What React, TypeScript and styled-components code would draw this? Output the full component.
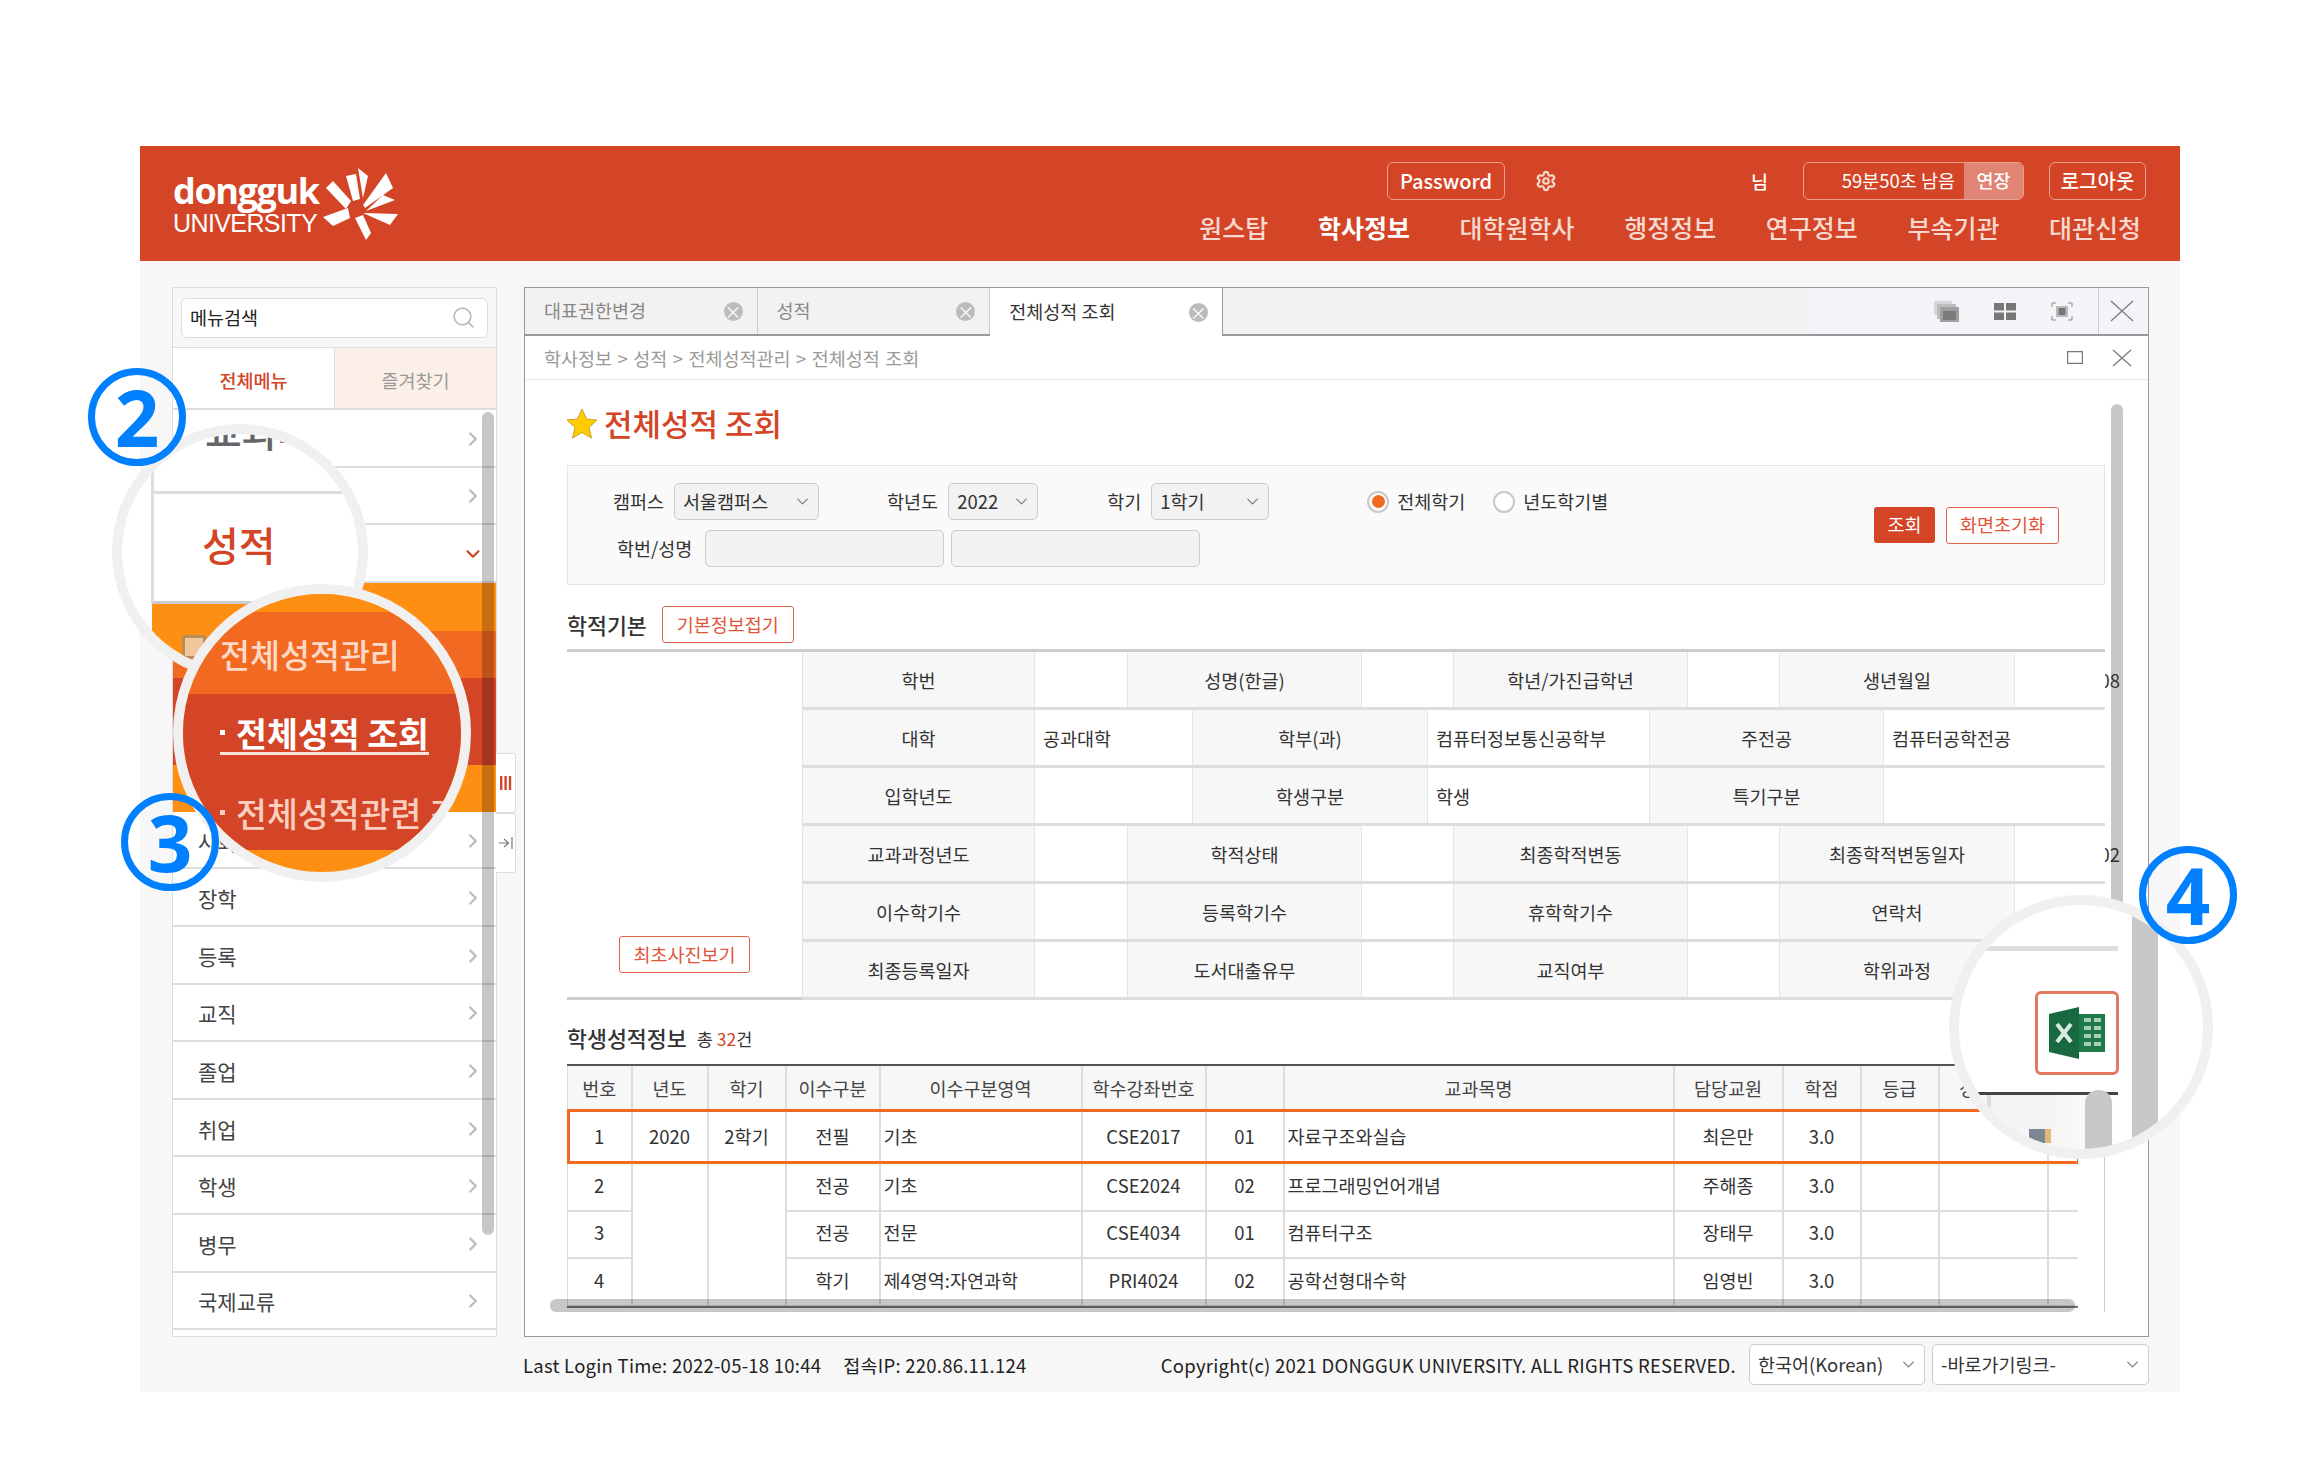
import React from "react";
import styled, { createGlobalStyle } from "styled-components";
import { ChevronDown, ChevronRight, Search, Settings } from "lucide-react";

const RED = "#d34526";
const ORANGE = "#ff8f12";
const DEEP_ORANGE = "#f26a21";
const BLUE = "#0080ff";

const GlobalStyle = createGlobalStyle`
  html, body {
    margin: 0;
    background: #fff;
    font-family: "Noto Sans CJK KR", "Noto Sans", sans-serif;
    font-size: 18.5px;
    color: #333;
  }
  * { box-sizing: border-box; }
`;

// Data
const NAV = ["원스탑", "학사정보", "대학원학사", "행정정보", "연구정보", "부속기관", "대관신청"];
const MENU_BOTTOM = ["장학", "등록", "교직", "졸업", "취업", "학생", "병무", "국제교류"];
const TABS = ["대표권한변경", "성적", "전체성적 조회"];

const WIDE = [233, 92, 235, 91, 235, 91, 236, 90];
const NARROW = [233, 157, 236, 221, 235, 221];

const INFO_ROWS: { cols: number[]; cells: string[]; tail?: string }[] = [
  { cols: WIDE, cells: ["학번", "", "성명(한글)", "", "학년/가진급학년", "", "생년월일", ""], tail: "08" },
  { cols: NARROW, cells: ["대학", "공과대학", "학부(과)", "컴퓨터정보통신공학부", "주전공", "컴퓨터공학전공"] },
  { cols: NARROW, cells: ["입학년도", "", "학생구분", "학생", "특기구분", ""] },
  { cols: WIDE, cells: ["교과과정년도", "", "학적상태", "", "최종학적변동", "", "최종학적변동일자", ""], tail: "02" },
  { cols: WIDE, cells: ["이수학기수", "", "등록학기수", "", "휴학학기수", "", "연락처", ""] },
  { cols: WIDE, cells: ["최종등록일자", "", "도서대출유무", "", "교직여부", "", "학위과정", ""] },
];

const GRADE_COLS = [64, 76, 78, 94, 202, 124, 78, 390, 109, 78, 78, 109, 31];
const GRADE_HEAD = ["번호", "년도", "학기", "이수구분", "이수구분영역", "학수강좌번호", "", "교과목명", "담당교원", "학점", "등급", "성적구분", ""];
const GRADE_ROWS = [
  ["2", "전공", "기초", "CSE2024", "02", "프로그래밍언어개념", "주해종"],
  ["3", "전공", "전문", "CSE4034", "01", "컴퓨터구조", "장태무"],
  ["4", "학기", "제4영역:자연과학", "PRI4024", "02", "공학선형대수학", "임영빈"],
];

function Thin({ d, w, h }: { d: string; w: number; h: number }) {
  return (
    <svg width={w} height={h} viewBox={`0 0 ${w} ${h}`} fill="none" stroke="#777" strokeWidth="1.2">
      <path d={d} />
    </svg>
  );
}

function Logo() {
  return (
    <LogoWrap>
      <LogoText>
        <LogoName>dongguk</LogoName>
        <LogoSub>UNIVERSITY</LogoSub>
      </LogoText>
      <svg width="75" height="72" viewBox="0 0 75 72" fill="#fff">
        <polygon points="3,20 10,13 28,33 23,41" />
        <polygon points="23,8 33,6 37,31 30,33" />
        <polygon points="35,0 45,8 40,30" />
        <polygon points="63,5 70,20 42,40 40,37" />
        <polygon points="60,27 72,32 43,43" />
        <polygon points="40,45 75,46 67,57" />
        <polygon points="32,50 40,47 48,65 43,72" />
        <polygon points="0,49 25,40 27,50 10,58" />
        <circle cx="34" cy="41" r="7" fill={RED} />
      </svg>
    </LogoWrap>
  );
}

function ExcelIcon() {
  return (
    <svg width="56" height="52" viewBox="0 0 56 52">
      <rect x="28" y="7" width="28" height="38" fill="#1f7a4a" />
      <g fill="#a9cdb8">
        <rect x="35" y="11" width="7" height="4" />
        <rect x="45" y="11" width="7" height="4" />
        <rect x="35" y="19" width="7" height="4" />
        <rect x="45" y="19" width="7" height="4" />
        <rect x="35" y="27" width="7" height="4" />
        <rect x="45" y="27" width="7" height="4" />
        <rect x="35" y="35" width="7" height="4" />
        <rect x="45" y="35" width="7" height="4" />
      </g>
      <polygon points="0,7 30,0 30,52 0,45" fill="#18693f" />
      <path d="M8 17L22 35M22 17L8 35" stroke="#dcebe2" strokeWidth="4" fill="none" />
    </svg>
  );
}

function Select({ width, label, footer }: { width: number; label: string; footer?: boolean }) {
  return (
    <SelectBox $width={width} $footer={footer}>
      <SelectText>{label}</SelectText>
      <ChevronDown size={19} strokeWidth={1.4} color="#777" />
    </SelectBox>
  );
}

function MenuChevron() {
  return <ChevronRight size={22} color="#bdbdbd" strokeWidth={2.6} />;
}

export default function App() {
  return (
    <Page>
      <GlobalStyle />
      <Frame>
        <Header>
          <Logo />
          <HeaderRight>
            <TopRow>
              <HeaderBtn $width={118}>Password</HeaderBtn>
              <GearSlot>
                <Settings size={22} color="#f6d7cc" strokeWidth={2.4} />
              </GearSlot>
              <Sir>님</Sir>
              <Timer>
                <TimerText>59분50초 남음</TimerText>
                <Extend>연장</Extend>
              </Timer>
              <LogoutBtn $width={97}>로그아웃</LogoutBtn>
            </TopRow>
            <Nav>
              {NAV.map((item) => (
                <NavItem key={item} $active={item === "학사정보"}>
                  {item}
                </NavItem>
              ))}
            </Nav>
          </HeaderRight>
        </Header>

        <Body>
          <Sidebar>
            <SearchArea>
              <SearchBox>
                메뉴검색
                <Search size={25} color="#bbb" strokeWidth={1.6} />
              </SearchBox>
            </SearchArea>
            <SideTabs>
              <SideTab $active>전체메뉴</SideTab>
              <SideTab>즐겨찾기</SideTab>
            </SideTabs>
            <MenuRow>
              <span />
              <MenuChevron />
            </MenuRow>
            <MenuRow>
              <span />
              <MenuChevron />
            </MenuRow>
            <MenuRow>
              <span />
              <ChevronDown size={22} color={RED} strokeWidth={2.4} />
            </MenuRow>
            <SubMenu>
              <SubBand $color={ORANGE} $height={48} />
              <SubBand $color={DEEP_ORANGE} $height={47} />
              <SubBand $color={RED} $height={87} />
              <SubBand $color={ORANGE} $height={47} />
            </SubMenu>
            <MenuRow>
              <MenuLabel>사회봉사</MenuLabel>
              <MenuChevron />
            </MenuRow>
            {MENU_BOTTOM.map((item) => (
              <MenuRow key={item}>
                <MenuLabel>{item}</MenuLabel>
                <MenuChevron />
              </MenuRow>
            ))}
            <SideScroll />
            <SideHandle $top={465}>
              <svg width="12" height="14" viewBox="0 0 12 14" fill={RED}>
                <rect x="0" width="2.4" height="14" />
                <rect x="4.4" width="2.4" height="14" />
                <rect x="8.8" width="2.4" height="14" />
              </svg>
            </SideHandle>
            <SideHandle $top={525}>
              <Thin w={14} h={14} d="M0 7H9M5 3L9.5 7L5 11M13 1V13" />
            </SideHandle>
          </Sidebar>

          <Main>
            <TabBar>
              {TABS.map((tab) => (
                <Tab key={tab} $active={tab === "전체성적 조회"}>
                  <TabLabel>{tab}</TabLabel>
                  <TabClose>×</TabClose>
                </Tab>
              ))}
              <TabFill />
              <TabTools>
                <ToolIcon>
                  <svg width="25" height="21" viewBox="0 0 25 21">
                    <rect x="0" y="0" width="18" height="14" fill="#d6d6d6" />
                    <rect x="3" y="3" width="19" height="15" fill="#bdbdbd" />
                    <rect x="6" y="6" width="19" height="15" fill="#a0a0a0" />
                    <rect x="9" y="10" width="13" height="9" fill="#7c7c7c" />
                  </svg>
                </ToolIcon>
                <ToolIcon>
                  <svg width="22" height="17" viewBox="0 0 22 17" fill="#777">
                    <rect width="10" height="7.5" />
                    <rect x="12" width="10" height="7.5" />
                    <rect y="9.5" width="10" height="7.5" />
                    <rect x="12" y="9.5" width="10" height="7.5" />
                  </svg>
                </ToolIcon>
                <ToolIcon>
                  <svg width="22" height="19" viewBox="0 0 22 19" fill="none">
                    <path d="M1 5V1H5M17 1H21V5M21 14V18H17M5 18H1V14" stroke="#888" />
                    <rect x="5" y="4" width="12" height="11" fill="#bbb" />
                    <rect x="7.5" y="6" width="7" height="7" fill="#777" />
                  </svg>
                </ToolIcon>
                <ToolClose>
                  <Thin w={24} h={22} d="M1 1L23 21M23 1L1 21" />
                </ToolClose>
              </TabTools>
            </TabBar>

            <Crumb>
              <CrumbText>학사정보 &gt; 성적 &gt; 전체성적관리 &gt; 전체성적 조회</CrumbText>
              <CrumbTools>
                <Thin w={16} h={13} d="M0.6 0.6H15.4V12.4H0.6Z" />
                <Thin w={24} h={18} d="M3 1L21 17M21 1L3 17" />
              </CrumbTools>
            </Crumb>

            <Content>
              <TitleRow>
                <svg width="32" height="31" viewBox="0 0 32 31">
                  <polygon
                    points="16,1 20.5,11 31,12 23,19.5 25.5,30 16,24.5 6.5,30 9,19.5 1,12 11.5,11"
                    fill="#ffcc00"
                    stroke="#c9a227"
                  />
                </svg>
                <PageTitle>전체성적 조회</PageTitle>
              </TitleRow>

              <FilterBox>
                <FilterCol>
                  <FilterRow>
                    <FieldLabel>캠퍼스</FieldLabel>
                    <Select width={145} label="서울캠퍼스" />
                    <FieldLabel $gap={68}>학년도</FieldLabel>
                    <Select width={90} label="2022" />
                    <FieldLabel $gap={69}>학기</FieldLabel>
                    <Select width={118} label="1학기" />
                    <RadioGroup>
                      <Radio $checked />
                      <RadioText>전체학기</RadioText>
                      <Radio />
                      <RadioText>년도학기별</RadioText>
                    </RadioGroup>
                  </FilterRow>
                  <FilterRow $indent={4}>
                    <FieldLabel>학번/성명</FieldLabel>
                    <FilterInput $width={239} />
                    <FilterInput $width={249} $gap={7} />
                  </FilterRow>
                </FilterCol>
                <FilterButtons>
                  <SolidBtn>조회</SolidBtn>
                  <LineBtn $width={113}>화면초기화</LineBtn>
                </FilterButtons>
              </FilterBox>

              <SectionRow>
                <SectionTitle>학적기본</SectionTitle>
                <LineBtn $width={132}>기본정보접기</LineBtn>
              </SectionRow>

              <InfoTable>
                <PhotoCol>
                  <LineBtn $width={131}>최초사진보기</LineBtn>
                </PhotoCol>
                <InfoRows>
                  {INFO_ROWS.map((row) => (
                    <InfoRow key={row.cells[0]} $cols={row.cols}>
                      {row.cells.map((cell, i) =>
                        i % 2 === 0 ? (
                          <InfoHead key={i}>{cell}</InfoHead>
                        ) : (
                          <InfoValue key={i}>
                            {cell}
                            {i === row.cells.length - 1 && row.tail && <TailDigits>{row.tail}</TailDigits>}
                          </InfoValue>
                        )
                      )}
                    </InfoRow>
                  ))}
                </InfoRows>
              </InfoTable>

              <GradeTitleRow>
                <SectionTitle>학생성적정보</SectionTitle>
                <GradeCount>
                  총 <em>32</em>건
                </GradeCount>
              </GradeTitleRow>

              <GradeWrap>
                <GradeClip>
                  <GradeTable>
                    <colgroup>
                      {GRADE_COLS.map((w, i) => (
                        <col key={i} width={w} />
                      ))}
                    </colgroup>
                    <thead>
                      <tr>
                        {GRADE_HEAD.map((head, i) => (
                          <GradeHead key={i}>{head}</GradeHead>
                        ))}
                      </tr>
                    </thead>
                    <tbody>
                      <HighlightRow>
                        <GradeCell>1</GradeCell>
                        <GradeCell>2020</GradeCell>
                        <GradeCell>2학기</GradeCell>
                        <GradeCell>전필</GradeCell>
                        <GradeCell $left>기초</GradeCell>
                        <GradeCell>CSE2017</GradeCell>
                        <GradeCell>01</GradeCell>
                        <GradeCell $left>자료구조와실습</GradeCell>
                        <GradeCell>최은만</GradeCell>
                        <GradeCell>3.0</GradeCell>
                        <GradeCell />
                        <GradeCell />
                        <GradeCell />
                      </HighlightRow>
                      {GRADE_ROWS.map((row, i) => (
                        <PlainRow key={row[0]}>
                          <GradeCell>{row[0]}</GradeCell>
                          {i === 0 && <GradeCell rowSpan={3} />}
                          {i === 0 && <GradeCell rowSpan={3} />}
                          <GradeCell>{row[1]}</GradeCell>
                          <GradeCell $left>{row[2]}</GradeCell>
                          <GradeCell>{row[3]}</GradeCell>
                          <GradeCell>{row[4]}</GradeCell>
                          <GradeCell $left>{row[5]}</GradeCell>
                          <GradeCell>{row[6]}</GradeCell>
                          <GradeCell>3.0</GradeCell>
                          <GradeCell />
                          <GradeCell />
                          <GradeCell />
                        </PlainRow>
                      ))}
                    </tbody>
                  </GradeTable>
                </GradeClip>
                <HScroll />
              </GradeWrap>
            </Content>
            <VScroll />
          </Main>
        </Body>

        <Footer>
          <FooterText>Last Login Time: 2022-05-18 10:44</FooterText>
          <FooterText $gap={22}>접속IP: 220.86.11.124</FooterText>
          <FooterSpacer />
          <FooterText $after={6}>Copyright(c) 2021 DONGGUK UNIVERSITY. ALL RIGHTS RESERVED.</FooterText>
          <Select width={176} label="한국어(Korean)" footer />
          <Select width={217} label="-바로가기링크-" footer />
        </Footer>
      </Frame>

      {/* Magnifier callouts */}
      <Lens $left={112} $top={424} $size={256}>
        <LensTopRow>
          <LensFaint>교과과정</LensFaint>
        </LensTopRow>
        <LensGradeRow>성적</LensGradeRow>
        <LensOrange>
          <LensIcon />
        </LensOrange>
      </Lens>

      <Lens $left={173} $top={584} $size={298} $fill={ORANGE}>
        <LensBand $color={ORANGE} $height={18} />
        <LensBand $color={DEEP_ORANGE} $height={82}>
          <LensMenuTitle>전체성적관리</LensMenuTitle>
        </LensBand>
        <LensBand $color={RED} $height={156} $column>
          <LensItem $active>
            <LensDot />
            전체성적 조회
          </LensItem>
          <LensItem>
            <LensDot />
            전체성적관련 조회
          </LensItem>
        </LensBand>
      </Lens>

      <Lens $left={1949} $top={895} $size={264}>
        <LensRule $color="#dedede" $height={5} $gap={41} />
        <ExcelBox>
          <ExcelIcon />
        </ExcelBox>
        <LensRule $color="#444" $height={3} $gap={17} />
        <LensHeadArea>
          <LensColLine />
          <LensMark />
        </LensHeadArea>
        <LensMiniScroll />
        <LensBigScroll />
      </Lens>

      <Badge $left={88} $top={368}>2</Badge>
      <Badge $left={121} $top={793}>3</Badge>
      <Badge $left={2139} $top={846}>4</Badge>
    </Page>
  );
}

const Page = styled.div`
  position: relative;
  width: 2305px;
  height: 1464px;
  padding: 146px 0 0 140px;
  overflow: hidden;
  background: #fff;
`;

const Frame = styled.div`
  width: 2040px;
  height: 1246px;
  display: flex;
  flex-direction: column;
  background: #f7f7f7;
`;

const Header = styled.header`
  height: 115px;
  flex: none;
  display: flex;
  justify-content: space-between;
  padding: 16px 34px 0 33px;
  background: ${RED};
  color: #fff;
`;

const LogoWrap = styled.div`
  display: flex;
  align-items: flex-start;
  gap: 5px;
  padding-top: 6px;
`;

const LogoText = styled.div`
  width: 145px;
  display: flex;
  flex-direction: column;
  padding-top: 4px;
  white-space: nowrap;
`;

const LogoName = styled.div`
  font-family: "Open Sans", sans-serif;
  font-size: 36px;
  font-weight: 700;
  line-height: 38px;
  letter-spacing: -1.4px;
`;

const LogoSub = styled.div`
  margin-top: 2px;
  font-family: "Liberation Sans", sans-serif;
  font-size: 25px;
  line-height: 23px;
  letter-spacing: -0.6px;
`;

const HeaderRight = styled.div`
  display: flex;
  flex-direction: column;
  align-items: flex-end;
`;

const TopRow = styled.div`
  display: flex;
  align-items: center;
  height: 38px;
  font-size: 20px;
  font-weight: 500;
`;

const HeaderBtn = styled.div<{ $width: number }>`
  width: ${(p) => p.$width}px;
  height: 38px;
  display: flex;
  align-items: center;
  justify-content: center;
  padding-bottom: 2px;
  border: 1px solid #e9a08e;
  border-radius: 6px;
`;

const LogoutBtn = styled(HeaderBtn)`
  margin-left: 25px;
`;

const GearSlot = styled.div`
  display: flex;
  margin-left: 30px;
`;

const Sir = styled.div`
  margin-left: 194px;
  margin-right: 35px;
  font-size: 18.5px;
`;

const Timer = styled.div`
  width: 221px;
  height: 38px;
  display: flex;
  align-items: center;
  justify-content: flex-end;
  border: 1px solid #e9a08e;
  border-radius: 6px;
  overflow: hidden;
  font-size: 18.5px;
  font-weight: 400;
`;

const TimerText = styled.span`
  margin-right: 9px;
  padding-bottom: 2px;
`;

const Extend = styled.span`
  width: 59px;
  height: 100%;
  display: flex;
  align-items: center;
  justify-content: center;
  padding-bottom: 2px;
  background: #e08573;
  font-weight: 500;
`;

const Nav = styled.nav`
  display: flex;
  gap: 49.6px;
  margin-top: 10px;
  padding-right: 5px;
`;

const NavItem = styled.div<{ $active?: boolean }>`
  font-size: 25px;
  line-height: 34px;
  font-weight: ${(p) => (p.$active ? 700 : 500)};
  color: ${(p) => (p.$active ? "#fff" : "#f7d9cf")};
`;

const Body = styled.div`
  height: 1050px;
  flex: none;
  display: flex;
  gap: 27px;
  margin: 26px 31px 0 32px;
`;

const Sidebar = styled.aside`
  position: relative;
  width: 325px;
  flex: none;
  display: flex;
  flex-direction: column;
  border: 1px solid #ddd;
  background: #fff;
`;

const SearchArea = styled.div`
  height: 60px;
  padding: 10px 8px;
  background: #f7f7f7;
  border-bottom: 1px solid #ddd;
`;

const SearchBox = styled.div`
  height: 40px;
  display: flex;
  align-items: center;
  justify-content: space-between;
  padding: 0 11px 2px 8px;
  background: #fff;
  border: 1px solid #ddd;
  border-radius: 6px;
  color: #222;
`;

const SideTabs = styled.div`
  height: 62px;
  flex: none;
  display: grid;
  grid-template-columns: 161px 1fr;
  border-bottom: 2px solid #ddd;
`;

const SideTab = styled.div<{ $active?: boolean }>`
  display: flex;
  align-items: center;
  justify-content: center;
  padding-top: 3px;
  background: ${(p) => (p.$active ? "#fff" : "#fcefe7")};
  color: ${(p) => (p.$active ? RED : "#999")};
  font-weight: ${(p) => (p.$active ? 500 : 400)};
  border-left: ${(p) => (p.$active ? "none" : "1px solid #ddd")};
`;

const MenuRow = styled.div`
  height: 57.6px;
  flex: none;
  display: flex;
  align-items: center;
  justify-content: space-between;
  padding: 2px 12px 0 25px;
  border-bottom: 2px solid #ddd;
`;

const MenuLabel = styled.span`
  font-size: 21px;
  color: #444;
`;

const SubMenu = styled.div`
  height: 229px;
  flex: none;
  display: flex;
  flex-direction: column;
`;

const SubBand = styled.div<{ $color: string; $height: number }>`
  height: ${(p) => p.$height}px;
  background: ${(p) => p.$color};
`;

const SideScroll = styled.div`
  position: absolute;
  top: 124px;
  right: 2px;
  width: 12px;
  height: 823px;
  border-radius: 6px;
  background: rgba(0, 0, 0, 0.22);
`;

const SideHandle = styled.div<{ $top: number }>`
  position: absolute;
  top: ${(p) => p.$top}px;
  left: 100%;
  width: 20px;
  height: 60px;
  display: flex;
  align-items: center;
  justify-content: center;
  background: #fff;
  border: 1px solid #ddd;
  border-left: none;
  border-radius: 0 3px 3px 0;
`;

const Main = styled.main`
  position: relative;
  flex: 1;
  display: flex;
  flex-direction: column;
  border: 1px solid #999;
  background: #fff;
  overflow: hidden;
`;

const TabBar = styled.div`
  height: 48px;
  flex: none;
  display: flex;
  border-bottom: 2px solid #999;
  background: #f2f2f2;
`;

const Tab = styled.div<{ $active?: boolean }>`
  width: 232.6px;
  height: ${(p) => (p.$active ? "48px" : "46px")};
  flex: none;
  display: flex;
  align-items: center;
  justify-content: space-between;
  padding: 0 14px 0 19px;
  border-right: 1px solid ${(p) => (p.$active ? "#999" : "#ccc")};
  background: ${(p) => (p.$active ? "#fff" : "#f2f2f2")};
  color: ${(p) => (p.$active ? "#333" : "#888")};
`;

const TabLabel = styled.span`
  padding-bottom: 2px;
`;

const TabClose = styled.span`
  width: 19px;
  height: 19px;
  display: flex;
  align-items: center;
  justify-content: center;
  border-radius: 50%;
  background: #bcbcbc;
  color: #fff;
  font-size: 17px;
  line-height: 1;
`;

const TabFill = styled.div`
  flex: 1;
`;

const TabTools = styled.div`
  width: 339px;
  height: 46px;
  flex: none;
  display: flex;
  align-items: center;
  justify-content: flex-end;
  gap: 35px;
  background: #f2f4f8;
`;

const ToolIcon = styled.div`
  display: flex;
`;

const ToolClose = styled.div`
  width: 50px;
  height: 46px;
  margin-left: -10px;
  display: flex;
  align-items: center;
  justify-content: center;
  padding-right: 3px;
  border-left: 1px solid #ccc;
`;

const Crumb = styled.div`
  height: 44px;
  flex: none;
  display: flex;
  align-items: center;
  justify-content: space-between;
  padding: 0 14px 0 19px;
  border-bottom: 1px solid #e8e8e8;
  color: #999;
`;

const CrumbText = styled.span`
  word-spacing: 1.3px;
`;

const CrumbTools = styled.div`
  display: flex;
  align-items: center;
  gap: 27px;
`;

const Content = styled.div`
  flex: 1;
  padding: 27px 43px 0 42px;
`;

const TitleRow = styled.div`
  height: 32px;
  display: flex;
  align-items: center;
  gap: 6px;
  margin-left: -1px;
`;

const PageTitle = styled.h1`
  margin: 0;
  font-size: 31px;
  font-weight: 500;
  line-height: 32px;
  color: ${RED};
`;

const FilterBox = styled.div`
  height: 120px;
  margin-top: 26px;
  display: flex;
  justify-content: space-between;
  border: 1px solid #e5e5e5;
  background: #fafafa;
`;

const FilterCol = styled.div`
  display: flex;
  flex-direction: column;
  gap: 10px;
  padding: 17px 0 0 45px;
`;

const FilterRow = styled.div<{ $indent?: number }>`
  height: 37px;
  display: flex;
  align-items: center;
  padding-left: ${(p) => p.$indent ?? 0}px;
`;

const FieldLabel = styled.span<{ $gap?: number }>`
  margin-left: ${(p) => p.$gap ?? 0}px;
  margin-right: 10px;
  padding-bottom: 2px;
  color: #333;
  white-space: nowrap;
`;

const SelectBox = styled.div<{ $width: number; $footer?: boolean }>`
  width: ${(p) => p.$width}px;
  height: ${(p) => (p.$footer ? "41px" : "37px")};
  flex: none;
  display: flex;
  align-items: center;
  justify-content: space-between;
  padding: 0 6px 0 8px;
  border: 1px solid #ccc;
  border-radius: 5px;
  background: ${(p) => (p.$footer ? "#fff" : "#f2f2f2")};
  margin-left: ${(p) => (p.$footer ? "7px" : "0")};
`;

const SelectText = styled.span`
  padding-bottom: 2px;
  white-space: nowrap;
`;

const RadioGroup = styled.div`
  display: flex;
  align-items: center;
  margin-left: 98px;
`;

const Radio = styled.span<{ $checked?: boolean }>`
  width: 22px;
  height: 22px;
  flex: none;
  display: flex;
  align-items: center;
  justify-content: center;
  border-radius: 50%;
  border: 2px solid #c8c8c8;
  background: #fff;
  &::after {
    content: "";
    width: 13px;
    height: 13px;
    border-radius: 50%;
    background: ${(p) => (p.$checked ? DEEP_ORANGE : "transparent")};
  }
`;

const RadioText = styled.span`
  margin: 0 28px 0 8px;
  padding-bottom: 2px;
  white-space: nowrap;
`;

const FilterInput = styled.div<{ $width: number; $gap?: number }>`
  width: ${(p) => p.$width}px;
  height: 37px;
  margin-left: ${(p) => p.$gap ?? 3}px;
  border: 1px solid #ccc;
  border-radius: 5px;
  background: #f2f2f2;
`;

const FilterButtons = styled.div`
  display: flex;
  align-items: center;
  gap: 11px;
  padding-right: 45px;
`;

const SolidBtn = styled.div`
  width: 61px;
  height: 36px;
  display: flex;
  align-items: center;
  justify-content: center;
  padding-bottom: 2px;
  border-radius: 3px;
  background: ${RED};
  color: #fff;
`;

const LineBtn = styled.div<{ $width: number }>`
  width: ${(p) => p.$width}px;
  height: 37px;
  display: flex;
  align-items: center;
  justify-content: center;
  padding-bottom: 2px;
  border: 1px solid #e0644a;
  border-radius: 3px;
  background: #fff;
  color: #e0553a;
`;

const SectionRow = styled.div`
  height: 37px;
  margin-top: 21px;
  display: flex;
  align-items: center;
  gap: 15px;
`;

const SectionTitle = styled.h2`
  margin: 0;
  font-size: 21.7px;
  font-weight: 500;
  color: #333;
`;

const InfoTable = styled.div`
  margin-top: 6px;
  display: flex;
  border-top: 3px solid #ccc;
`;

const PhotoCol = styled.div`
  width: 235px;
  flex: none;
  display: flex;
  align-items: flex-end;
  justify-content: center;
  padding-bottom: 24px;
  border-bottom: 3px solid #ccc;
`;

const InfoRows = styled.div`
  flex: 1;
`;

const InfoRow = styled.div<{ $cols: number[] }>`
  height: 58px;
  display: grid;
  grid-template-columns: ${(p) => p.$cols.map((c) => `${c}px`).join(" ")};
  border-bottom: 3px solid #ddd;
`;

const InfoHead = styled.div`
  display: flex;
  align-items: center;
  justify-content: center;
  background: #f7f7f7;
  border-right: 1px solid #e5e5e5;
  border-left: 1px solid #e5e5e5;
  color: #333;
`;

const InfoValue = styled.div`
  display: flex;
  align-items: center;
  justify-content: flex-start;
  padding: 0 0 0 8px;
`;

const TailDigits = styled.span`
  position: relative;
  z-index: 1;
  width: 15px;
  margin-left: auto;
  margin-right: -15px;
  display: flex;
  justify-content: flex-end;
  overflow: hidden;
`;

const GradeTitleRow = styled.div`
  height: 30px;
  margin-top: 22px;
  display: flex;
  align-items: center;
  gap: 10px;
`;

const GradeCount = styled.span`
  font-size: 17.5px;
  padding-top: 3px;
  em {
    font-style: normal;
    color: ${RED};
  }
`;

const GradeWrap = styled.div`
  position: relative;
  height: 248px;
  margin-top: 12px;
  border-right: 1px solid #ccc;
`;

const GradeClip = styled.div`
  width: 1511px;
  height: 244px;
  overflow: hidden;
  border-top: 2px solid #555;
  border-bottom: 2px solid #777;
`;

const GradeTable = styled.table`
  width: 1511px;
  table-layout: fixed;
  border-collapse: collapse;
`;

const GradeHead = styled.th`
  height: 44px;
  padding: 0;
  background: #f7f7f7;
  border-right: 2px solid #ddd;
  border-left: 1px solid #ddd;
  font-weight: 400;
  color: #444;
`;

const GradeCell = styled.td<{ $left?: boolean }>`
  padding: 0 0 0 ${(p) => (p.$left ? "3px" : "0")};
  text-align: ${(p) => (p.$left ? "left" : "center")};
  border: 1px solid #ddd;
  border-right-width: 2px;
  border-bottom-width: 2px;
  color: #333;
  white-space: nowrap;
`;

const HighlightRow = styled.tr`
  height: 53px;
  outline: 3px solid ${DEEP_ORANGE};
  outline-offset: -2px;
`;

const PlainRow = styled.tr`
  height: 47.6px;
  td {
    padding-bottom: 4px;
  }
`;

const HScroll = styled.div`
  position: absolute;
  left: -17px;
  top: 235px;
  width: 1525px;
  height: 13px;
  border-radius: 6px;
  background: rgba(0, 0, 0, 0.22);
`;

const VScroll = styled.div`
  position: absolute;
  top: 116px;
  right: 25px;
  width: 12px;
  height: 600px;
  border-radius: 6px;
  background: #c8c8c8;
`;

const Footer = styled.footer`
  height: 55px;
  flex: none;
  display: flex;
  align-items: center;
  padding: 0 31px 0 383px;
`;

const FooterText = styled.span<{ $gap?: number; $after?: number }>`
  margin-left: ${(p) => p.$gap ?? 0}px;
  margin-right: ${(p) => p.$after ?? 0}px;
  white-space: nowrap;
  color: #222;
  letter-spacing: 0.25px;
`;

const FooterSpacer = styled.div`
  flex: 1;
`;

const Lens = styled.div<{ $left: number; $top: number; $size: number; $fill?: string }>`
  position: absolute;
  left: ${(p) => p.$left}px;
  top: ${(p) => p.$top}px;
  width: ${(p) => p.$size}px;
  height: ${(p) => p.$size}px;
  border: 10px solid #f0f0f0;
  border-radius: 50%;
  overflow: hidden;
  background: ${(p) => p.$fill ?? "#fff"};
`;

const LensTopRow = styled.div`
  height: 60px;
  display: flex;
  margin-left: 29px;
  padding-left: 51px;
  border-left: 3px solid #ddd;
  border-bottom: 3px solid #ddd;
`;

const LensFaint = styled.div`
  margin-top: -24px;
  font-size: 40px;
  line-height: 40px;
  font-weight: 500;
  color: #666;
  white-space: nowrap;
`;

const LensGradeRow = styled.div`
  height: 110px;
  margin-left: 29px;
  display: flex;
  align-items: center;
  padding: 0 0 8px 48px;
  border-left: 3px solid #ddd;
  border-bottom: 3px solid #ccc;
  font-size: 40px;
  font-weight: 500;
  color: ${RED};
`;

const LensOrange = styled.div`
  height: 100px;
  margin-left: 30px;
  padding: 31px 0 0 30px;
  background: ${ORANGE};
`;

const LensIcon = styled.div`
  width: 24px;
  height: 24px;
  border: 3px solid #b98a5a;
  border-radius: 3px;
  background: #f0c79a;
`;

const LensBand = styled.div<{ $color: string; $height: number; $column?: boolean }>`
  height: ${(p) => p.$height}px;
  display: flex;
  flex-direction: ${(p) => (p.$column ? "column" : "row")};
  align-items: ${(p) => (p.$column ? "flex-start" : "center")};
  padding-left: 37px;
  background: ${(p) => p.$color};
`;

const LensMenuTitle = styled.div`
  font-size: 32.6px;
  font-weight: 500;
  color: #fdd9c8;
  white-space: nowrap;
`;

const LensItem = styled.div<{ $active?: boolean }>`
  height: ${(p) => (p.$active ? "61px" : "46px")};
  margin-top: ${(p) => (p.$active ? "0" : "34px")};
  padding-top: ${(p) => (p.$active ? "18px" : "0")};
  display: flex;
  align-items: center;
  gap: 11px;
  font-size: 33.6px;
  font-weight: ${(p) => (p.$active ? 700 : 500)};
  color: ${(p) => (p.$active ? "#fff" : "#fbcfc0")};
  border-bottom: ${(p) => (p.$active ? "3px solid #fde3da" : "none")};
  white-space: nowrap;
`;

const LensDot = styled.span`
  width: 5px;
  height: 5px;
  background: currentColor;
`;

const LensRule = styled.div<{ $color: string; $height: number; $gap: number }>`
  width: 159px;
  height: ${(p) => p.$height}px;
  margin-top: ${(p) => p.$gap}px;
  background: ${(p) => p.$color};
`;

const ExcelBox = styled.div`
  width: 84px;
  height: 84px;
  margin: 40px 0 0 76px;
  display: flex;
  align-items: center;
  justify-content: center;
  border: 3px solid #e27a62;
  border-radius: 6px;
`;

const LensHeadArea = styled.div`
  width: 159px;
  height: 60px;
  display: flex;
  justify-content: space-between;
  background: linear-gradient(90deg, #f5f5f5 60%, #fff 100%);
`;

const LensColLine = styled.div`
  width: 4px;
  height: 24px;
  margin-left: 28px;
  background: #ddd;
`;

const LensMark = styled.div`
  width: 22px;
  height: 14px;
  margin: 34px 67px 0 0;
  background: #7d8794;
  border-right: 6px solid #e3b877;
`;

const LensMiniScroll = styled.div`
  position: absolute;
  left: 126px;
  top: 185px;
  width: 27px;
  height: 70px;
  border-radius: 13px 13px 0 0;
  background: #c8c8c8;
`;

const LensBigScroll = styled.div`
  position: absolute;
  left: 173px;
  top: 0;
  bottom: 0;
  width: 26px;
  background: #c8c8c8;
`;

const Badge = styled.div<{ $left: number; $top: number }>`
  position: absolute;
  left: ${(p) => p.$left}px;
  top: ${(p) => p.$top}px;
  width: 98px;
  height: 98px;
  display: flex;
  align-items: center;
  justify-content: center;
  border: 7px solid ${BLUE};
  border-radius: 50%;
  font-family: "Open Sans", sans-serif;
  font-size: 78px;
  font-weight: 700;
  line-height: 1;
  color: ${BLUE};
`;
